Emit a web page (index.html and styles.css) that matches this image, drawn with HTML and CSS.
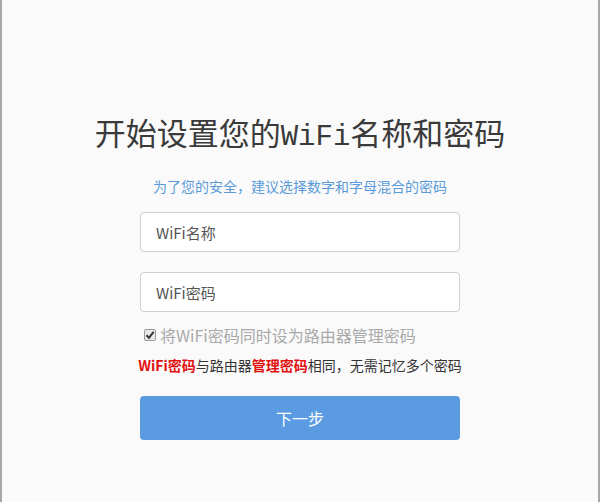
FILE: index.html
```html
<!DOCTYPE html>
<html lang="zh-CN">
<head>
<meta charset="utf-8">
<title>WiFi设置</title>
<link rel="stylesheet" href="styles.css">
</head>
<body>
<div class="frame">
  <div class="panel">
    <h1 class="title">开始设置您的<span class="mono">WiFi</span>名称和密码</h1>
    <p class="tip">为了您的安全，建议选择数字和字母混合的密码</p>
    <div class="field"><span class="placeholder">WiFi名称</span></div>
    <div class="field"><span class="placeholder">WiFi密码</span></div>
    <label class="check">
      <span class="box"><svg width="10" height="10" viewBox="0 0 10 10"><path d="M1.5 5.2 L4 7.8 L8.6 1.8" fill="none" stroke="#333" stroke-width="2"/></svg></span>
      <span>将WiFi密码同时设为路由器管理密码</span>
    </label>
    <p class="note"><b class="red">WiFi密码</b>与路由器<b class="red">管理密码</b>相同，无需记忆多个密码</p>
    <div class="btn">下一步</div>
  </div>
</div>
</body>
</html>
```
FILE: styles.css
```css
html, body {
  margin: 0;
  padding: 0;
}
body {
  background: #fafafa;
  font-family: "Noto Sans CJK SC", "Microsoft YaHei", sans-serif;
}
.frame {
  box-sizing: border-box;
  width: 600px;
  height: 502px;
  border-left: 2px solid #a8a8a8;
  border-right: 2px solid #a8a8a8;
  background: #fafafa;
  display: flex;
  justify-content: center;
}
.panel {
  width: 320px;
  padding-top: 113px;
  display: flex;
  flex-direction: column;
  align-items: stretch;
}
.title {
  margin: 0 -120px;
  font-size: 31px;
  line-height: 37px;
  height: 37px;
  font-weight: normal;
  color: #3a3a3a;
  text-align: center;
  white-space: nowrap;
}
.mono {
  font-family: "Liberation Mono", "DejaVu Sans Mono", monospace;
  font-size: 29px;
  line-height: 1;
}
.tip {
  margin: 26px 0 0;
  font-size: 14px;
  line-height: 20px;
  color: #5b9ad8;
  text-align: center;
}
.field {
  box-sizing: border-box;
  height: 40px;
  margin-top: 16px;
  border: 1px solid #cfcfcf;
  border-radius: 4px;
  background: #fff;
  padding-left: 15px;
  display: flex;
  align-items: center;
}
.field + .field {
  margin-top: 20px;
}
.placeholder {
  font-size: 15px;
  color: #555;
}
.check {
  margin-top: 11px;
  height: 24px;
  display: flex;
  align-items: center;
  gap: 4px;
  padding-left: 4px;
  font-size: 16px;
  color: #a9a9a9;
  white-space: nowrap;
}
.box {
  box-sizing: border-box;
  width: 12px;
  height: 12px;
  border: 1px solid #9a9a9a;
  border-radius: 2px;
  background: #e8e8e8;
  display: flex;
  align-items: center;
  justify-content: center;
}
.note {
  margin: 8px -10px 0;
  font-size: 14px;
  line-height: 20px;
  color: #333;
  text-align: center;
  white-space: nowrap;
}
.red {
  color: #e31010;
  font-weight: bold;
}
.btn {
  margin-top: 21px;
  height: 44px;
  border-radius: 4px;
  background: #5a9be2;
  color: #fff;
  font-size: 16px;
  display: flex;
  align-items: center;
  justify-content: center;
}
```
